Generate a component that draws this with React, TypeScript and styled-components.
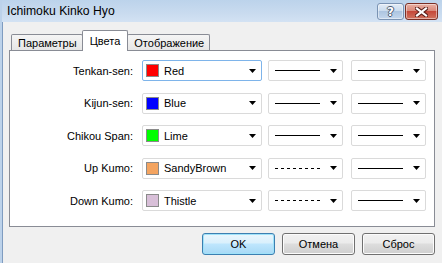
import React from "react";
import styled, { createGlobalStyle } from "styled-components";

const Global = createGlobalStyle`
  html, body { margin: 0; padding: 0; background: #f0f0f0; }
  #root { width: 442px; height: 263px; }
`;

const Window = styled.div`
  width: 442px;
  height: 263px;
  box-sizing: border-box;
  display: flex;
  flex-direction: column;
  overflow: hidden;
  border-left: 2px solid #bcd2ea;
  background: #f0f0f0;
  font-family: "Liberation Sans", Arial, sans-serif;
  font-size: 11px;
  color: #000;
`;

const TitleBar = styled.div`
  height: 22px;
  flex: none;
  display: flex;
  align-items: flex-start;
  padding-left: 5px;
  padding-right: 4px;
  background: linear-gradient(#bcd3eb, #c9dbef 60%, #d3e2f3);
`;

const Title = styled.div`
  flex: 1;
  font-size: 12.2px;
  line-height: 23px;
  color: #000;
`;

const CaptionButton = styled.div<{ $kind: "help" | "close" }>`
  margin-top: 3px;
  height: 17px;
  width: ${(p) => (p.$kind === "help" ? "27px" : "33px")};
  margin-left: ${(p) => (p.$kind === "help" ? "0" : "1px")};
  box-sizing: border-box;
  border-radius: 3px;
  border: 1px solid ${(p) => (p.$kind === "help" ? "#7a93b3" : "#7a2f25")};
  background: ${(p) =>
    p.$kind === "help"
      ? "linear-gradient(#e2ebf6, #cbdcee 45%, #adc5e1 50%, #c4d7ed)"
      : "linear-gradient(#eab0a3, #d98a7b 45%, #c5493a 50%, #d0735f)"};
  box-shadow: inset 0 0 0 1px rgba(255, 255, 255, 0.45);
  display: flex;
  align-items: center;
  justify-content: center;
`;

const HelpGlyph = styled.span`
  font-family: "DejaVu Sans", sans-serif;
  font-weight: bold;
  font-size: 12px;
  line-height: 12px;
  color: #ffffff;
  text-shadow: 1px 0 #4a5a70, -1px 0 #4a5a70, 0 1px #4a5a70, 0 -1px #4a5a70;
`;

const Client = styled.div`
  flex: 1;
  display: flex;
  flex-direction: column;
  border-left: 1px solid #7f9cc0;
  padding: 8px 7px 0 6px;
`;

const TabStrip = styled.div`
  display: flex;
  align-items: flex-end;
  height: 20px;
  padding-left: 2px;
`;

const Tab = styled.div<{ $active?: boolean }>`
  box-sizing: border-box;
  height: ${(p) => (p.$active ? "21px" : "16px")};
  margin-bottom: ${(p) => (p.$active ? "-1px" : "0")};
  padding: ${(p) => (p.$active ? "0 7px 1px" : "0 5px 0 6px")};
  margin-left: ${(p) => (p.$active ? "-1px" : "0")};
  margin-right: ${(p) => (p.$active ? "-1px" : "0")};
  position: relative;
  z-index: ${(p) => (p.$active ? 2 : 1)};
  display: flex;
  align-items: center;
  border: 1px solid #898c95;
  border-bottom: none;
  border-radius: 2px 2px 0 0;
  background: ${(p) => (p.$active ? "#ffffff" : "linear-gradient(#f5f5f5, #e6e6e6)")};
  white-space: nowrap;
`;

const Panel = styled.div`
  position: relative;
  z-index: 1;
  height: 177px;
  box-sizing: border-box;
  border: 1px solid #898c95;
  background: #ffffff;
  padding: 9px 0 0 0;
  display: flex;
  flex-direction: column;
  gap: 11.5px;
`;

const Row = styled.div`
  display: flex;
  align-items: center;
  height: 21px;
`;

const Label = styled.div`
  width: 123px;
  text-align: right;
  white-space: nowrap;
`;

const Combo = styled.div<{ $w: number; $ml: number; $focus?: boolean }>`
  width: ${(p) => p.$w}px;
  margin-left: ${(p) => p.$ml}px;
  height: 21px;
  box-sizing: border-box;
  border: 1px solid ${(p) => (p.$focus ? "#7eb4ea" : "#dadada")};
  border-radius: 2px;
  background: #ffffff;
  display: flex;
  align-items: center;
  padding: 0 5px 0 3px;
`;

const Swatch = styled.div<{ $c: string }>`
  width: 13px;
  height: 13px;
  box-sizing: border-box;
  border: 1px solid #8a8a8a;
  background: ${(p) => p.$c};
  flex: none;
`;

const ComboText = styled.div`
  flex: 1;
  margin-left: 5px;
  white-space: nowrap;
`;

const LineArea = styled.div`
  flex: 1;
  display: flex;
  align-items: center;
  padding-left: 3px;
`;

const ButtonRow = styled.div`
  display: flex;
  justify-content: flex-end;
  gap: 7px;
  margin-top: 6px;
`;

const Button = styled.div<{ $default?: boolean }>`
  width: 73px;
  height: 22px;
  box-sizing: border-box;
  border-radius: 3px;
  border: 1px solid ${(p) => (p.$default ? "#3c7fb1" : "#707070")};
  background: ${(p) =>
    p.$default
      ? "linear-gradient(#eaf6fd, #d9f0fc 45%, #bee6fd 50%, #a7d9f5)"
      : "linear-gradient(#f2f2f2, #ebebeb 45%, #dddddd 50%, #cfcfcf)"};
  box-shadow: inset 0 0 0 1px ${(p) => (p.$default ? "#9fe2f9" : "#fcfcfc")};
  display: flex;
  align-items: center;
  justify-content: center;
`;

const Arrow = () => (
  <svg width="7" height="4" viewBox="0 0 7 4" style={{ flex: "none" }}>
    <polygon points="0,0 7,0 3.5,4" fill="#000" />
  </svg>
);

const LineSample = ({ dashed }: { dashed?: boolean }) => (
  <svg width="46" height="3" viewBox="0 0 46 3">
    <line
      x1="0"
      y1="1.5"
      x2="45"
      y2="1.5"
      stroke="#000"
      strokeWidth="1"
      strokeDasharray={dashed ? "3 3" : undefined}
    />
  </svg>
);

const CloseGlyph = () => (
  <svg width="13" height="10" viewBox="0 0 13 10">
    <path d="M2 1.5 L11 8.5 M11 1.5 L2 8.5" stroke="#5a1e18" strokeWidth="4.2" strokeLinecap="square" />
    <path d="M2 1.5 L11 8.5 M11 1.5 L2 8.5" stroke="#ffffff" strokeWidth="2.2" strokeLinecap="square" />
  </svg>
);

const rows = [
  { label: "Tenkan-sen:", color: "#ff0000", name: "Red", dashed: false, focus: true },
  { label: "Kijun-sen:", color: "#0000ff", name: "Blue", dashed: false },
  { label: "Chikou Span:", color: "#00ff00", name: "Lime", dashed: false },
  { label: "Up Kumo:", color: "#f4a460", name: "SandyBrown", dashed: true },
  { label: "Down Kumo:", color: "#d8bfd8", name: "Thistle", dashed: true },
];

export default function App() {
  return (
    <>
      <Global />
      <Window>
        <TitleBar>
          <Title>Ichimoku Kinko Hyo</Title>
          <CaptionButton $kind="help">
            <HelpGlyph>?</HelpGlyph>
          </CaptionButton>
          <CaptionButton $kind="close">
            <CloseGlyph />
          </CaptionButton>
        </TitleBar>
        <Client>
          <TabStrip>
            <Tab>Параметры</Tab>
            <Tab $active>Цвета</Tab>
            <Tab>Отображение</Tab>
          </TabStrip>
          <Panel>
            {rows.map((r) => (
              <Row key={r.label}>
                <Label>{r.label}</Label>
                <Combo $w={120} $ml={9} $focus={r.focus}>
                  <Swatch $c={r.color} />
                  <ComboText>{r.name}</ComboText>
                  <Arrow />
                </Combo>
                <Combo $w={75} $ml={6}>
                  <LineArea>
                    <LineSample dashed={r.dashed} />
                  </LineArea>
                  <Arrow />
                </Combo>
                <Combo $w={75} $ml={8}>
                  <LineArea>
                    <LineSample />
                  </LineArea>
                  <Arrow />
                </Combo>
              </Row>
            ))}
          </Panel>
          <ButtonRow>
            <Button $default>OK</Button>
            <Button>Отмена</Button>
            <Button>Сброс</Button>
          </ButtonRow>
        </Client>
      </Window>
    </>
  );
}
